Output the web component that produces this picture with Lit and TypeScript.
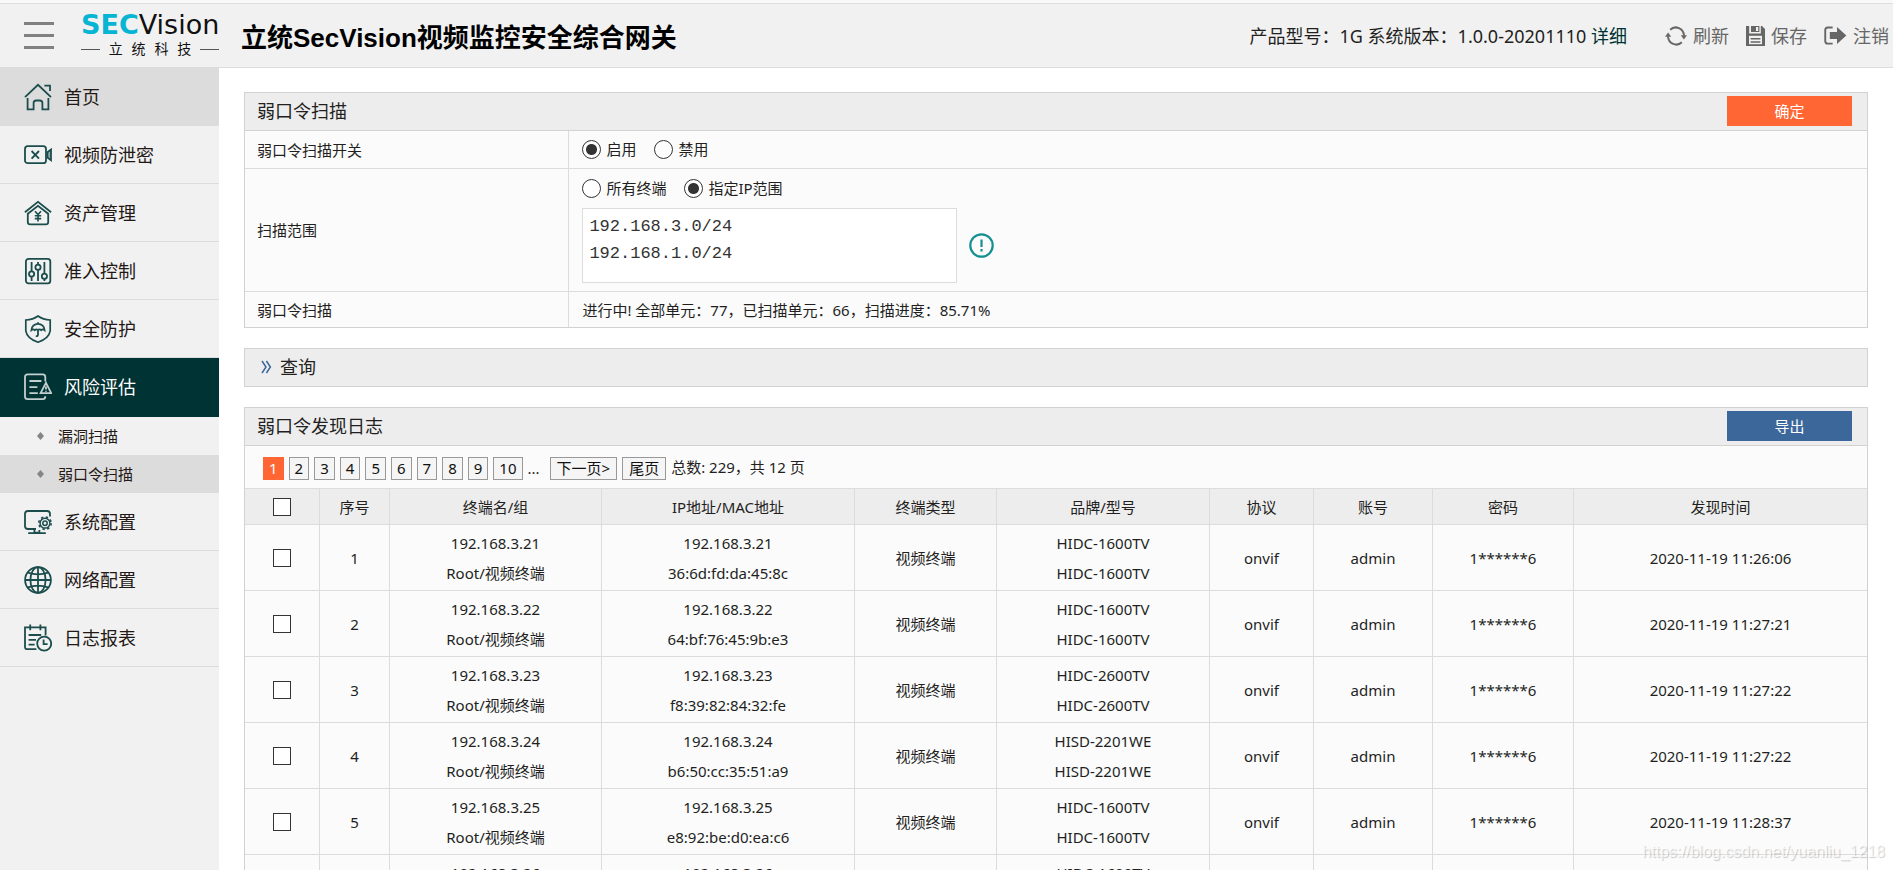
import { LitElement, html, css, svg, nothing } from "lit";
import { customElement, property } from "lit/decorators.js";
import { classMap } from "lit/directives/class-map.js";

const base = css`
  *,
  *::before,
  *::after {
    box-sizing: border-box;
  }
  a {
    color: inherit;
    text-decoration: none;
  }
  svg {
    display: block;
    flex: none;
  }
  button {
    font: inherit;
    cursor: pointer;
  }
`;

const icons: Record<string, unknown> = {
  home: svg`
    <path d="M1 14.2 14 1.8l13 12.4M20.4 2.6h5.6v5.4"/>
    <path d="M3.6 15v11.3h6v-6.2q0-2.6 2.6-2.6h3.6q2.6 0 2.6 2.6v6.2h6V15"/>`,
  video: svg`
    <rect x="1" y="5.2" width="21" height="17" rx="2.8"/>
    <path d="m7.6 10 7.4 7.6m0-7.6-7.4 7.6"/>
    <path d="M27 8.6v10.6l-3.6-2.6v-5.4z" fill="currentColor" fill-opacity=".45"/>`,
  asset: svg`
    <path d="M.9 13.2 14 2.9l13.1 10.3"/>
    <path d="M3.8 14.8V23q0 2.4 2.4 2.4h15.6q2.4 0 2.4-2.4v-8.2L14 6.8z"/>
    <path d="m11 12.2 3 3.4 3-3.4m-3 3.4v6.8m-3.2-5.6h6.4m-6.4 2.8h6.4" stroke-width="1.6"/>`,
  sliders: svg`
    <rect x="1.9" y="1.9" width="24.4" height="24.4" rx="2.6"/>
    <path d="M7.6 5v9.4m0 5.4V24M14 5v2.4m0 5.4V24M20.4 5v11.2m0 5.4V24"/>
    <circle cx="7.6" cy="17" r="2.6"/><circle cx="14" cy="10.2" r="2.6"/><circle cx="20.4" cy="19.2" r="2.6"/>`,
  shield: svg`
    <path d="M14 1Q19 4.6 26.2 5v10.8Q25 23.4 14 27.2 3 23.4 1.8 15.8V5Q9 4.6 14 1z" stroke-width="1.7"/>
    <path d="M7.4 15.2a6.6 6.4 0 0 1 13.2 0q-1.8-1.7-3.4 0-1.6-1.7-3.2 0-1.6-1.7-3.2 0-1.6-1.7-3.4 0zM14 8.6V7.2m0 8v4.4q0 1.8-2.2 1.6"/>`,
  risk: svg`
    <path d="M21.3 8.6V4q0-2.6-2.6-2.6H3.6Q1 1.4 1 4v19.6q0 2.6 2.6 2.6h15.1q2.6 0 2.6-2.6v-.4"/>
    <path d="M5.4 8h12M5.4 14.2h8M5.4 20.2h8.4"/>
    <path d="m22 9.8 5.2 10.4H16.6zM22 13.4v3m0 1.4v1"/>`,
  system: svg`
    <path d="M12 21H4q-3 0-3-3V6q0-3 3-3h19q3 0 3 3v2.6"/>
    <path d="M10.4 21v3.6h5V22M4.2 25.2h17.6"/>
    <circle cx="21" cy="15.2" r="2.2" stroke-width="1.5"/>
    <circle cx="21" cy="15.2" r="4.9" stroke-width="1.5"/>
    <circle cx="21" cy="15.2" r="6.2" stroke-width="1.6" stroke-dasharray="2.4 2.47"/>`,
  globe: svg`
    <circle cx="14" cy="14" r="12.9"/><ellipse cx="14" cy="14" rx="7.6" ry="12.9"/>
    <path d="M14 1v26M1 14h26M3.8 6.6q10.2 3.4 20.4 0M3.8 21.4q10.2-3.4 20.4 0" />`,
  log: svg`
    <path d="M12.4 25.2H3.2q-2.2 0-2.2-2.2V3.4h20.6v8"/>
    <path d="M6.2.6v5.6M16.4.6v5.6M4.6 11h12.6M4.6 15.8H12M4.6 20.6h6"/>
    <circle cx="20.2" cy="19.6" r="7"/><path d="M19.6 15.4v4.8h4"/>`,
};

interface NavItem {
  label: string;
  icon: string;
  state?: string;
  children?: { label: string; on?: boolean }[];
}

const NAV: NavItem[] = [
  { label: "首页", icon: "home", state: "hover" },
  { label: "视频防泄密", icon: "video" },
  { label: "资产管理", icon: "asset" },
  { label: "准入控制", icon: "sliders" },
  { label: "安全防护", icon: "shield" },
  {
    label: "风险评估",
    icon: "risk",
    state: "active",
    children: [{ label: "漏洞扫描" }, { label: "弱口令扫描", on: true }],
  },
  { label: "系统配置", icon: "system" },
  { label: "网络配置", icon: "globe" },
  { label: "日志报表", icon: "log" },
];

@customElement("app-header")
class AppHeader extends LitElement {
  static styles = [
    base,
    css`
      :host {
        display: block;
        background: #f1f1f1;
        border-bottom: 1px solid #dcdcdc;
      }
      .strip {
        height: 4px;
        background: #f9f9f9;
        border-bottom: 1px solid #dedede;
      }
      .bar {
        display: flex;
        align-items: center;
        height: 63px;
        padding: 0 4px 0 24px;
      }
      .menu {
        display: flex;
        flex-direction: column;
        gap: 9px;
        width: 30px;
        padding: 0;
        border: 0;
        background: none;
      }
      .menu span {
        height: 3px;
        background: #808080;
      }
      .logo {
        width: 138px;
        margin-left: 27px;
        color: #111;
      }
      .word {
        font: 27px/24px "DejaVu Sans", sans-serif;
        white-space: nowrap;
      }
      .word b {
        color: #06b4d3;
      }
      .tag {
        display: flex;
        align-items: center;
        justify-content: space-between;
        margin-top: 3px;
        font-size: 14px;
        line-height: 18px;
      }
      .rule {
        width: 19px;
        height: 1px;
        background: #555;
      }
      h1 {
        margin: 0 0 0 22px;
        padding-top: 5px;
        font: bold 26px/36px "Liberation Sans", "Noto Sans CJK SC", sans-serif;
        color: #000;
        white-space: nowrap;
      }
      .info {
        margin-left: auto;
        font-size: 18px;
        line-height: 26px;
        white-space: nowrap;
      }
      .info a {
        color: #033;
      }
      .tools {
        display: flex;
        gap: 17px;
        margin-left: 38px;
      }
      .tool {
        display: flex;
        align-items: center;
        gap: 6px;
        padding: 0;
        border: 0;
        background: none;
        font-size: 18px;
        line-height: 26px;
        color: #666;
        white-space: nowrap;
      }
    `,
  ];

  render() {
    return html`
      <div class="strip"></div>
      <div class="bar">
        <button class="menu" aria-label="菜单"><span></span><span></span><span></span></button>
        <div class="logo">
          <div class="word"><b>SEC</b>Vision</div>
          <div class="tag">
            <i class="rule"></i><span>立</span><span>统</span><span>科</span><span>技</span><i class="rule"></i>
          </div>
        </div>
        <h1>立统SecVision视频监控安全综合网关</h1>
        <div class="info">产品型号：1G 系统版本：1.0.0-20201110 <a href="#">详细</a></div>
        <div class="tools">
          <button class="tool">
            <svg width="22" height="22" viewBox="0 0 22 22" fill="none" stroke="#666" stroke-width="2">
              <path d="M5.200 4.800A8.200 8.600 0 0 1 19 10.500M16.800 17.200A8.200 8.600 0 0 1 3 11.500" />
              <path d="M15.800 10.200H22L18.900 14.600zM0 11.800h6.200L3.100 7.400z" fill="#666" stroke="none" />
            </svg>
            刷新
          </button>
          <button class="tool">
            <svg width="19" height="20" viewBox="0 0 19 20">
              <path d="M0 0h3.200v7.400h11.600V0h1.200l3 3v17H0z" fill="#666" />
              <path d="M5 0h8.400v6H5z" fill="#666" />
              <path d="M10 1h2.200v4H10z" fill="#f1f1f1" />
              <path d="M3 9.800h13v8.400H3z" fill="#f1f1f1" />
              <path d="M4.600 12h9.800v1.500H4.600zM4.600 15.200h9.800v1.500H4.600z" fill="#666" />
            </svg>
            保存
          </button>
          <button class="tool">
            <svg width="23" height="19" viewBox="0 0 24 20">
              <path d="M9 1.500H4Q1.200 1.500 1.200 4.300v11.400q0 2.800 2.800 2.800h5" fill="none" stroke="#666" stroke-width="2" />
              <path d="M6 6.200h7.600V1L23.400 10l-9.800 9v-5.200H6z" fill="#666" />
            </svg>
            注销
          </button>
        </div>
      </div>
    `;
  }
}

@customElement("side-nav")
class SideNav extends LitElement {
  static styles = [
    base,
    css`
      :host {
        display: block;
        background: #f1f1f1;
        color: #231815;
      }
      .item {
        display: flex;
        align-items: center;
        gap: 12px;
        height: 58px;
        padding-left: 24px;
        border-bottom: 1px solid #dcdcdc;
        font-size: 18px;
        line-height: 26px;
      }
      .item svg {
        color: #1c4d4d;
      }
      .hover {
        background: #dcdcdc;
      }
      .active {
        height: 59px;
        background: #033;
        border-color: #033;
        color: #fff;
      }
      .active svg {
        color: #c4d0d0;
      }
      .sub {
        display: flex;
        align-items: center;
        gap: 14px;
        height: 38px;
        padding-left: 37px;
        font-size: 15px;
        line-height: 22px;
      }
      .on {
        background: #dcdcdc;
      }
    `,
  ];

  render() {
    return html`<nav>
      ${NAV.map(
        (n) => html`
          <a href="#" class=${classMap({ item: true, [n.state ?? "plain"]: true })}>
            <svg width="28" height="28" viewBox="0 0 28 28" fill="none" stroke="currentColor" stroke-width="1.8">
              ${icons[n.icon]}
            </svg>
            ${n.label}
          </a>
          ${n.children?.map(
            (c) => html`<a href="#" class=${classMap({ sub: true, on: !!c.on })}>
              <svg width="7" height="8" viewBox="0 0 7 8"><path d="M3.500 0 7 4 3.500 8 0 4z" fill="#858585" /></svg>
              ${c.label}
            </a>`
          ) ?? nothing}
        `
      )}
    </nav>`;
  }
}

const panel = css`
  :host {
    display: block;
    border: 1px solid #d2d2d2;
    background: #fbfbfb;
  }
  .head {
    display: flex;
    align-items: center;
    height: 37px;
    padding: 0 15px 1px 12px;
    background: #ededed;
  }
  .head h2 {
    margin: 0;
    font-size: 18px;
    font-weight: 400;
    line-height: 26px;
  }
  .line {
    height: 38px;
    border-bottom: 1px solid #d2d2d2;
  }
  .act {
    width: 125px;
    height: 30px;
    margin-left: auto;
    padding: 0;
    border: 0;
    color: #fff;
    font-size: 15px;
    line-height: 30px;
  }
`;

@customElement("scan-config")
class ScanConfig extends LitElement {
  static styles = [
    base,
    panel,
    css`
      .ok {
        background: #f63;
      }
      .row {
        display: grid;
        grid-template-columns: 1fr 4fr;
        min-height: 38px;
        border-bottom: 1px solid #dcdcdc;
      }
      .row:last-child {
        min-height: 35px;
        border-bottom: 0;
      }
      .key {
        display: flex;
        align-items: center;
        padding-left: 12px;
        border-right: 1px solid #dcdcdc;
      }
      .val {
        display: flex;
        align-items: center;
        padding-left: 13px;
      }
      .stack {
        flex-direction: column;
        align-items: flex-start;
        gap: 9px;
        padding-top: 9px;
        padding-bottom: 8px;
      }
      .opts {
        display: flex;
        gap: 18px;
      }
      .opts label {
        display: flex;
        align-items: center;
        gap: 5px;
        line-height: 21px;
      }
      input {
        appearance: none;
        width: 19px;
        height: 19px;
        margin: 0;
        border: 1px solid #333;
        border-radius: 50%;
        background: #fff;
      }
      input:checked {
        background: radial-gradient(circle, #333 5px, #fff 6px);
      }
      .range {
        display: flex;
        align-items: center;
        gap: 12px;
      }
      textarea {
        display: block;
        width: 375px;
        height: 75px;
        padding: 4px 6px;
        border: 1px solid #dcdcdc;
        background: #fff;
        color: #333;
        font: 17px/27px "Liberation Mono", monospace;
        resize: none;
      }
    `,
  ];

  render() {
    return html`
      <div class="head line">
        <h2>弱口令扫描</h2>
        <button class="act ok">确定</button>
      </div>
      <div class="row">
        <div class="key">弱口令扫描开关</div>
        <div class="val">
          <div class="opts">
            <label><input type="radio" name="sw" checked />启用</label>
            <label><input type="radio" name="sw" />禁用</label>
          </div>
        </div>
      </div>
      <div class="row">
        <div class="key">扫描范围</div>
        <div class="val stack">
          <div class="opts">
            <label><input type="radio" name="scope" />所有终端</label>
            <label><input type="radio" name="scope" checked />指定IP范围</label>
          </div>
          <div class="range">
            <textarea aria-label="IP范围" .value=${"192.168.3.0/24\n192.168.1.0/24"}></textarea>
            <svg width="25" height="25" viewBox="0 0 25 25" fill="none" stroke="#149090" stroke-width="2.200">
              <circle cx="12.500" cy="12.500" r="11.200" />
              <path d="M12.500 6.500v7.500M12.500 16v2.400" />
            </svg>
          </div>
        </div>
      </div>
      <div class="row">
        <div class="key">弱口令扫描</div>
        <div class="val">进行中! 全部单元：77，已扫描单元：66，扫描进度：85.71%</div>
      </div>
    `;
  }
}

@customElement("query-panel")
class QueryPanel extends LitElement {
  static styles = [
    base,
    panel,
    css`
      .head {
        gap: 8px;
        padding-left: 16px;
      }
    `,
  ];

  render() {
    return html`<div class="head">
      <svg width="11" height="14" viewBox="0 0 11 14" fill="none" stroke="#3b679b" stroke-width="1.500">
        <path d="m1 1 4 6-4 6M5.400 1l4 6-4 6" />
      </svg>
      <h2>查询</h2>
    </div>`;
  }
}

interface LogRow {
  ip: string;
  mac: string;
  model: string;
  time: string;
}

const ROWS: LogRow[] = [
  { ip: "192.168.3.21", mac: "36:6d:fd:da:45:8c", model: "HIDC-1600TV", time: "2020-11-19 11:26:06" },
  { ip: "192.168.3.22", mac: "64:bf:76:45:9b:e3", model: "HIDC-1600TV", time: "2020-11-19 11:27:21" },
  { ip: "192.168.3.23", mac: "f8:39:82:84:32:fe", model: "HIDC-2600TV", time: "2020-11-19 11:27:22" },
  { ip: "192.168.3.24", mac: "b6:50:cc:35:51:a9", model: "HISD-2201WE", time: "2020-11-19 11:27:22" },
  { ip: "192.168.3.25", mac: "e8:92:be:d0:ea:c6", model: "HIDC-1600TV", time: "2020-11-19 11:28:37" },
  { ip: "192.168.3.26", mac: "", model: "HIDC-1600TV", time: "" },
];

const HEADS = ["序号", "终端名/组", "IP地址/MAC地址", "终端类型", "品牌/型号", "协议", "账号", "密码", "发现时间"];

@customElement("log-panel")
class LogPanel extends LitElement {
  @property({ attribute: false }) rows: LogRow[] = ROWS;

  static styles = [
    base,
    panel,
    css`
      .export {
        background: #3b679b;
      }
      .pager {
        display: flex;
        align-items: center;
        gap: 5px;
        height: 43px;
        padding: 2px 0 0 18px;
        border-bottom: 1px solid #dcdcdc;
      }
      .page {
        height: 23px;
        padding: 0 5px;
        border: 1px solid #999;
        background: #f5f5f5;
        color: #111;
        line-height: 21px;
      }
      .cur {
        border-color: #f63;
        background: #f63;
        color: #fff;
      }
      .word {
        padding: 0 6px;
      }
      .dots {
        margin-right: 5px;
      }
      .total {
        padding-bottom: 2px;
      }
      table {
        width: 100%;
        table-layout: fixed;
        border-spacing: 0;
      }
      .w-check { width: 75px; }
      .w-no { width: 70px; }
      .w-name { width: 212px; }
      .w-mac { width: 253px; }
      .w-type { width: 142px; }
      .w-model { width: 213px; }
      .w-proto { width: 104px; }
      .w-acct { width: 119px; }
      .w-pass { width: 141px; }
      th,
      td {
        padding: 0;
        border-right: 1px solid #dcdcdc;
        border-bottom: 1px solid #dcdcdc;
        font-weight: 400;
        line-height: 30px;
        text-align: center;
        vertical-align: middle;
      }
      th:last-child,
      td:last-child {
        border-right: 0;
      }
      th {
        height: 36px;
        background: #ededed;
      }
      td {
        height: 66px;
      }
      input {
        appearance: none;
        display: block;
        width: 18px;
        height: 18px;
        margin: 0 auto;
        border: 1px solid #333;
        background: #fff;
      }
    `,
  ];

  render() {
    return html`
      <div class="head line">
        <h2>弱口令发现日志</h2>
        <button class="act export">导出</button>
      </div>
      <div class="pager">
        ${[1, 2, 3, 4, 5, 6, 7, 8, 9, 10].map(
          (n) => html`<button class=${classMap({ page: true, cur: n === 1 })}>${n}</button>`
        )}
        <span class="dots">...</span>
        <button class="page word">下一页&gt;</button>
        <button class="page word">尾页</button>
        <span class="total">总数: 229，共 12 页</span>
      </div>
      <table>
        <colgroup>
          <col class="w-check" /><col class="w-no" /><col class="w-name" /><col class="w-mac" /><col class="w-type" />
          <col class="w-model" /><col class="w-proto" /><col class="w-acct" /><col class="w-pass" /><col />
        </colgroup>
        <thead>
          <tr>
            <th><input type="checkbox" aria-label="全选" /></th>
            ${HEADS.map((h) => html`<th>${h}</th>`)}
          </tr>
        </thead>
        <tbody>
          ${this.rows.map(
            (r, i) => html`<tr>
              <td><input type="checkbox" aria-label=${`选择 ${i + 1}`} /></td>
              <td>${i + 1}</td>
              <td>${r.ip}<br />Root/视频终端</td>
              <td>${r.ip}<br />${r.mac || html`&nbsp;`}</td>
              <td>视频终端</td>
              <td>${r.model}<br />${r.model}</td>
              <td>onvif</td>
              <td>admin</td>
              <td>1******6</td>
              <td>${r.time}</td>
            </tr>`
          )}
        </tbody>
      </table>
    `;
  }
}

@customElement("app-root")
class AppRoot extends LitElement {
  static styles = [
    base,
    css`
      :host {
        position: relative;
        display: flex;
        flex-direction: column;
        height: 100vh;
        overflow: hidden;
        background: #fff;
        color: #231f1e;
        font: 15px/22px "Noto Sans", "Noto Sans CJK SC", sans-serif;
      }
      .body {
        display: flex;
        flex: 1;
        min-height: 0;
      }
      .side {
        flex: none;
        width: 219px;
      }
      .main {
        display: flex;
        flex: 1;
        flex-direction: column;
        gap: 20px;
        min-width: 0;
        padding: 24px 25px 0;
        overflow: hidden;
      }
      .main > * {
        flex: none;
      }
      .mark {
        position: absolute;
        right: 8px;
        bottom: 8px;
        color: rgba(255, 255, 255, 0.7);
        font: 16px/20px "Liberation Sans", sans-serif;
        text-shadow: 1px 1px 1px rgba(0, 0, 0, 0.2);
      }
    `,
  ];

  render() {
    return html`
      <app-header></app-header>
      <div class="body">
        <side-nav class="side"></side-nav>
        <main class="main">
          <scan-config></scan-config>
          <query-panel></query-panel>
          <log-panel></log-panel>
        </main>
      </div>
      <div class="mark">https://blog.csdn.net/yuanliu_1218</div>
    `;
  }
}
